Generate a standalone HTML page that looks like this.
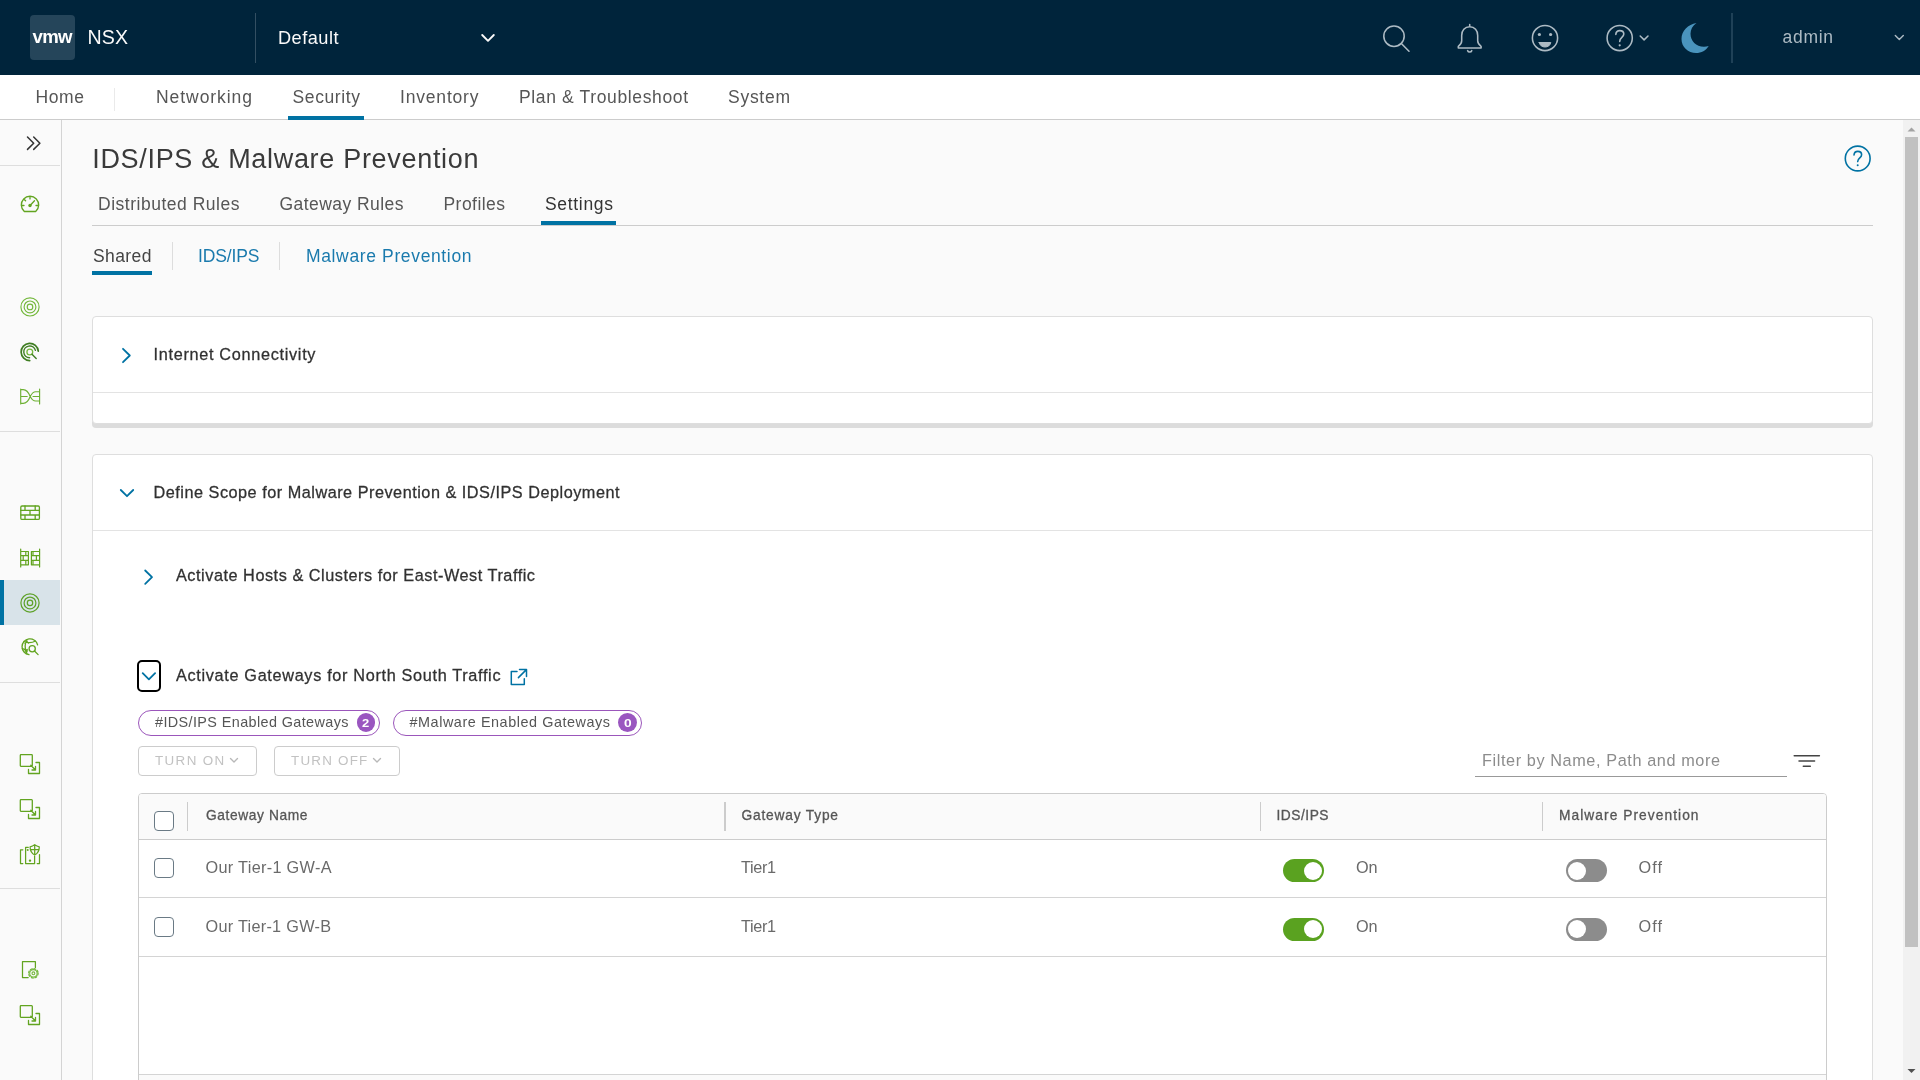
<!DOCTYPE html>
<html lang="en">
<head>
<meta charset="utf-8">
<title>NSX - IDS/IPS &amp; Malware Prevention</title>
<style>
*{box-sizing:border-box;margin:0;padding:0}
html,body{width:1920px;height:1080px;overflow:hidden;background:#fafafa;font-family:"Liberation Sans",Arial,sans-serif}
.a{position:absolute}
.t{position:absolute;white-space:pre;display:block}
svg{position:absolute;overflow:visible}
#hdr{left:0;top:0;width:1920px;height:75px;background:#00243b}
#nav{left:0;top:75px;width:1920px;height:45px;background:#fff;border-bottom:1px solid #ccc}
#side{left:0;top:120px;width:62px;height:960px;background:#fafafa;border-right:1px solid #d4d4d4}
.sep{left:0;width:60px;height:1px;background:#dedede}
.card{background:#fff;border:1px solid #dedede;border-radius:4px}
.cb{width:20px;height:20px;border:1px solid #6a7a85;border-radius:4px;background:#fff}
.g{fill:none;stroke:#62a420;stroke-width:1.5;stroke-linecap:round;stroke-linejoin:round}
.hi{fill:none;stroke:#adbbc4;stroke-width:1.55;stroke-linecap:round;stroke-linejoin:round}
.bl{fill:none;stroke:#0072a3;stroke-width:1.8;stroke-linecap:round;stroke-linejoin:round}
</style>
</head>
<body>
<!-- header -->
<div id="hdr" class="a"></div>
<div class="a" style="left:30px;top:15px;width:45px;height:45px;background:#25455a;border-radius:4px"></div>
<div class="a" style="left:255px;top:13px;width:1px;height:50px;background:#334f62"></div>
<div class="a" style="left:1731px;top:13px;width:2px;height:50px;background:#1f4157"></div>
<svg class="hi" style="left:0;top:0" width="1920" height="75">
 <path d="M482.200 35l5.800 5.800 5.800-5.800" stroke="#fafafa" stroke-width="1.900"/>
 <circle cx="1394" cy="36.200" r="10.200"/><path d="M1401.600 43.800l7.400 7.400"/>
 <path d="M1469.7 24.6v2.2M1469.7 26.8c-5 0-8 3.8-8 8.6v5.4c0 2.4-1.4 4.2-3.4 5.6v1.6h22.8v-1.6c-2-1.4-3.4-3.2-3.4-5.6v-5.4c0-4.8-3-8.6-8-8.6zM1467.6 50.6c.4 1 1.100 1.400 2.100 1.400s1.700-.4 2.100-1.400"/>
 <circle cx="1545" cy="38" r="12.6"/><circle cx="1539.400" cy="34.500" r="1.600" fill="#adbbc4" stroke="none"/><circle cx="1550.600" cy="34.500" r="1.600" fill="#adbbc4" stroke="none"/><path d="M1539.200 42.500h11.600c-.7 3-2.800 4.500-5.800 4.500s-5.100-1.500-5.800-4.500z" fill="#adbbc4" stroke-width="1"/>
 <circle cx="1619.700" cy="38" r="12.600"/><path d="M1615.800 34.400c.2-2.400 1.800-3.800 4-3.800 2.300 0 4 1.400 4 3.500 0 3.400-4.100 3.300-4.100 7.300" stroke-width="1.600"/><circle cx="1619.700" cy="45.300" r="1.100" fill="#adbbc4" stroke="none"/>
 <path d="M1640.200 36l3.900 3.900 3.900-3.900" stroke-width="1.500"/>
 <path d="M1895.300 35.500l4 4 4-4" stroke-width="1.400"/>
 <path d="M1696.500 23c-8.500 1.200-15 8-15 16 0 8.300 6.700 14 14.500 14 5.500 0 10-2.600 12.700-7-1.500.5-3 .7-4.700.7-8 0-13.500-5.700-13.500-13 0-4 2-8 6-10.700z" fill="#4a94bd" stroke="none"/>
</svg>
<!-- top nav -->
<div id="nav" class="a"></div>
<div class="a" style="left:114px;top:88px;width:1px;height:23px;background:#eaeaea"></div>
<div class="a" style="left:288px;top:116px;width:76px;height:4px;background:#0072a3"></div>
<!-- side nav -->
<div id="side" class="a"></div>
<div class="a sep" style="top:165px"></div>
<div class="a sep" style="top:431px"></div>
<div class="a sep" style="top:682px"></div>
<div class="a sep" style="top:888px"></div>
<div class="a" style="left:0;top:580px;width:60px;height:45px;background:#d8e3e9"></div>
<div class="a" style="left:0;top:580px;width:4px;height:45px;background:#0072a3"></div>
<svg class="g" style="left:0;top:0" width="62" height="1080">
 <path d="M27.500 137l6.200 6.200-6.200 6.200M33.700 137l6.200 6.200-6.200 6.200" stroke="#333" stroke-width="1.500"/>
 <!-- gauge -->
 <path d="M24.300 211.500a8.700 8.700 0 1 1 11.400 0z" stroke-width="1.350"/>
 <path d="M22 205.500h2M36 205.500h2M30 197.300v1.600M24.500 199.700l1.100 1.100M30.300 205.200l4.200-4.400" stroke-width="1.300"/>
 <circle cx="30" cy="205.500" r="1.700" fill="#62a420" stroke="none"/>
 <!-- rings 1 -->
 <g stroke="#74b83c" stroke-width="1.150"><circle cx="30" cy="306.900" r="9.100"/><circle cx="30" cy="306.900" r="5.900"/><circle cx="30" cy="306.900" r="2.800"/></g>
 <!-- radar -->
 <g stroke="#3f7d22" stroke-width="1.700"><path d="M38.300 351.200a8.600 8.600 0 1 0-8.600 9.400"/><path d="M35.400 350.400a5.900 5.900 0 1 0-5.800 7.400" stroke-width="1.400"/></g>
 <circle cx="29.800" cy="352" r="2.900" stroke="#74b83c" stroke-width="1.300"/><path d="M32 354.300l4.200 4.200" stroke="#3f7d22" stroke-width="1.400"/>
 <!-- lb -->
 <g stroke="#6db033" stroke-width="1.150"><path d="M20.700 389v15M39.600 389v15M20.700 396.500h6.500M33 396.500h6.600M20.700 389.600h2.500c4 0 5.500 3 7 6.900 1.500 3 3 4.500 5.500 4.500h3.900M20.700 403.400h2.500c4 0 5.500-3 7-6.900 1.500-3 3-4.800 5.500-4.800h3.900"/></g>
 <!-- firewall -->
 <g stroke-width="1.300"><rect x="20.800" y="506" width="18.600" height="13.400" rx="1.200"/><path d="M20.800 510.400h18.600M20.800 515h18.600M25 506v4.400M35.200 506v4.400M30 510.400v4.600M25 515v4.400M35.200 515v4.400"/></g>
 <!-- dual firewall -->
 <g stroke-width="1.200"><path d="M20.700 549v18M39.600 549v18M28.400 551.500v13.300M31.400 551.500v13.300M20.700 551.500h7.700M20.700 555.700h7.700M20.700 560.400h7.700M20.700 564.800h7.700M31.400 551.500h8.200M31.400 555.700h8.200M31.400 560.400h8.200M31.400 564.800h8.200M25.800 551.500v4.200M23.200 555.700v4.700M25.800 560.400v4.400M33 551.500v4.200M36.400 555.700v4.700M33 560.400v4.400"/></g>
 <!-- rings 2 -->
 <g stroke="#5fa22a" stroke-width="1.250"><circle cx="30" cy="602.900" r="9.100"/><circle cx="30" cy="602.900" r="5.900"/><circle cx="30" cy="602.900" r="2.700"/></g>
 <!-- globe search -->
 <g stroke-width="1.300"><path d="M29 654.600a7.900 7.900 0 1 1 8.600-9.800"/><path d="M24 641.500c3.500 1.500 8 1.500 11.500-.5M22.300 648.500c1.500.8 3 1.200 4.500 1.300M27 640c-2 3-2.500 8-.3 13.500M25 643.500l1.500-2.500 1.800 2.200M25 651l2 .8.200-2.400"/><circle cx="32.200" cy="648.700" r="3.100"/><path d="M34.500 651l3.600 3.600"/></g>
 <!-- copy arrows -->
 <g stroke-width="1.300">
  <path d="M21 754.700h10.600a.7.700 0 0 1 .7.700v10.200a.7.700 0 0 1-.7.700H21a.7.700 0 0 1-.7-.7v-10.200a.7.700 0 0 1 .7-.7zM36 762.500h3.500v11h-11v-4M30.800 765.300l4.700 4.700M35.500 766.500v3.500h-3.500"/>
  <path d="M21 799.700h10.600a.7.700 0 0 1 .7.700v10.200a.7.700 0 0 1-.7.700H21a.7.700 0 0 1-.7-.7v-10.200a.7.700 0 0 1 .7-.7zM36 807.500h3.500v11h-11v-4M30.800 810.300l4.700 4.700M35.500 811.500v3.500h-3.500"/>
  <path d="M21 1005.700h10.600a.7.700 0 0 1 .7.700v10.200a.7.700 0 0 1-.7.700H21a.7.700 0 0 1-.7-.7v-10.200a.7.700 0 0 1 .7-.7zM36 1013.500h3.500v11h-11v-4M30.800 1016.300l4.700 4.700M35.500 1017.500v3.500h-3.500"/>
 </g>
 <!-- hosts shield -->
 <g stroke-width="1.250"><path d="M22.800 849.800h-2.300v13.700h2.300M37.200 863.500h2.300v-9M28.300 847.300h-2.700v16.200h9v-7.500"/><path d="M30.100 846.800c1.800-.3 3.200-1 4.600-2.200 1.400 1.200 2.800 1.900 4.600 2.200 0 4-1.500 6.700-4.600 8.200-3.100-1.500-4.600-4.200-4.600-8.200zM34.700 844.800v10M30.300 849.600h8.800"/><circle cx="30" cy="860.600" r=".6" fill="#62a420"/><circle cx="27.700" cy="850" r=".4" fill="#62a420"/></g>
 <!-- file gear -->
 <g stroke-width="1.250"><path d="M28.200 977.600h-5.700v-16h12.900v5.800"/><g stroke="#74b83c" stroke-width="1.100"><circle cx="33.400" cy="973.300" r="3.700"/><circle cx="33.400" cy="973.300" r="1.400"/><circle cx="33.400" cy="973.300" r="4.700" stroke-width="1.300" stroke-dasharray="1.850 1.840"/></g></g>

 </svg>

<!-- content -->
<div class="a" style="left:92px;top:225px;width:1781px;height:1px;background:#ccc"></div>
<div class="a" style="left:541px;top:221px;width:75px;height:4px;background:#0072a3"></div>
<div class="a" style="left:92px;top:271px;width:60px;height:4px;background:#0072a3"></div>
<div class="a" style="left:172px;top:242px;width:1px;height:28px;background:#ddd"></div>
<div class="a" style="left:279px;top:242px;width:1px;height:28px;background:#ddd"></div>
<svg class="bl" style="left:0;top:0;stroke-width:1.600" width="1920" height="200"><circle cx="1857.700" cy="158.500" r="12.400"/><path d="M1854 155c.2-2.300 1.700-3.600 3.800-3.600 2.200 0 3.800 1.300 3.800 3.300 0 3.200-3.900 3.100-3.900 6.900"/><circle cx="1857.700" cy="165.300" r="1" fill="#0072a3" stroke="none"/></svg>
<!-- card 1 -->
<div class="a card" style="left:92px;top:316px;width:1781px;height:108px;box-shadow:0 4px 0 0 #dcdcdc"></div>
<div class="a" style="left:93px;top:392px;width:1779px;height:1px;background:#e3e3e3"></div>
<!-- card 2 -->
<div class="a card" style="left:92px;top:454px;width:1781px;height:640px"></div>
<div class="a" style="left:93px;top:530px;width:1779px;height:1px;background:#e3e3e3"></div>
<svg class="bl" style="left:0;top:0" width="700" height="800">
 <path d="M123 348.800l6.800 6.700-6.800 6.700"/>
 <path d="M120.800 490l6.200 6.200 6.200-6.200"/>
 <path d="M145.200 570.500l6.800 6.700-6.800 6.700"/>
 <path d="M142.700 673.200l6.200 6.200 6.200-6.200"/>
 <path d="M517 671.600h-5.700v13h13v-5.800M518.400 677.600l8-8M519.500 669.500h7v7" stroke-width="1.500"/>
</svg>
<div class="a" style="left:137px;top:660px;width:24px;height:32px;border:2px solid #000;border-radius:5px"></div>
<!-- chips -->
<div class="a" style="left:138px;top:710px;width:242px;height:26px;border:1px solid #9b56bb;border-radius:13px;background:#fff"></div>
<div class="a" style="left:393px;top:710px;width:249px;height:26px;border:1px solid #9b56bb;border-radius:13px;background:#fff"></div>
<div class="a" style="left:356.800px;top:713px;width:18.600px;height:18.600px;border-radius:10px;background:#9a56c0"></div>
<div class="a" style="left:618.200px;top:713px;width:18.600px;height:18.600px;border-radius:10px;background:#9a56c0"></div>
<!-- buttons -->
<div class="a" style="left:138px;top:746px;width:119px;height:30px;border:1px solid #ccc;border-radius:4px"></div>
<div class="a" style="left:274px;top:746px;width:126px;height:30px;border:1px solid #ccc;border-radius:4px"></div>
<svg style="left:0;top:0;fill:none;stroke:#b8b8b8;stroke-width:1.400;stroke-linecap:round;stroke-linejoin:round" width="500" height="800">
 <path d="M230.500 758.500l3.500 3.500 3.500-3.500"/><path d="M373.500 758.500l3.500 3.500 3.500-3.500"/>
</svg>
<!-- filter -->
<div class="a" style="left:1475px;top:776px;width:312px;height:1px;background:#999"></div>
<svg style="left:0;top:0;fill:none;stroke:#444;stroke-width:1.500;stroke-linecap:round" width="1920" height="800"><path d="M1794.200 755.700h25.200M1799 761h15.600M1803.300 766.300h7"/></svg>
<!-- table -->
<div class="a" style="left:138px;top:793px;width:1689px;height:300px;border:1px solid #ccc;border-radius:4px;background:#fff"></div>
<div class="a" style="left:139px;top:794px;width:1687px;height:46px;background:#fafafa;border-bottom:1px solid #ccc;border-radius:3px 3px 0 0"></div>
<div class="a" style="left:139px;top:897px;width:1687px;height:1px;background:#d4d4d4"></div>
<div class="a" style="left:139px;top:956px;width:1687px;height:1px;background:#d4d4d4"></div>
<div class="a" style="left:139px;top:1074px;width:1687px;height:1px;background:#d4d4d4"></div>
<div class="a" style="left:139px;top:1075px;width:1687px;height:10px;background:#fafafa"></div>
<div class="a" style="left:187px;top:802px;width:1px;height:29px;background:#ccc"></div>
<div class="a" style="left:724px;top:802px;width:2px;height:29px;background:#ccc"></div>
<div class="a" style="left:1260px;top:802px;width:1px;height:29px;background:#ccc"></div>
<div class="a" style="left:1542px;top:802px;width:1px;height:29px;background:#ccc"></div>
<div class="a cb" style="left:154px;top:811px"></div>
<div class="a cb" style="left:154px;top:858px"></div>
<div class="a cb" style="left:154px;top:917px"></div>
<!-- toggles -->
<div class="a" style="left:1282.700px;top:859.2px;width:41.400px;height:22.800px;border-radius:12px;background:#5aa220"></div>
<div class="a" style="left:1304px;top:861.6px;width:18px;height:18px;border-radius:9px;background:#fff"></div>
<div class="a" style="left:1565.700px;top:859.2px;width:41.400px;height:22.800px;border-radius:12px;background:#8c8c8c"></div>
<div class="a" style="left:1568px;top:861.6px;width:18px;height:18px;border-radius:9px;background:#fff"></div>
<div class="a" style="left:1282.700px;top:917.8px;width:41.400px;height:22.800px;border-radius:12px;background:#5aa220"></div>
<div class="a" style="left:1304px;top:920.2px;width:18px;height:18px;border-radius:9px;background:#fff"></div>
<div class="a" style="left:1565.700px;top:917.8px;width:41.400px;height:22.800px;border-radius:12px;background:#8c8c8c"></div>
<div class="a" style="left:1568px;top:920.2px;width:18px;height:18px;border-radius:9px;background:#fff"></div>
<!-- scrollbar -->
<div class="a" style="left:1903px;top:120px;width:17px;height:960px;background:#f1f1f1"></div>
<div class="a" style="left:1905px;top:137px;width:13px;height:809.500px;background:#c1c1c1"></div>
<svg style="left:0;top:0" width="1920" height="1080"><path d="M1907.500 131.500l4-4 4 4z" fill="#a3a3a3"/><path d="M1907.500 1069l4 4 4-4z" fill="#505050"/></svg>
<div class="a" style="left:0;top:0;width:1920px;height:1080px;will-change:transform">
<span class="t" style="left:32.5px;top:26.00px;font-size:18.6px;line-height:22px;color:#fff;letter-spacing:-0.672px;font-weight:700;">vmw</span>
<span class="t" style="left:87.5px;top:25.00px;font-size:19.6px;line-height:24px;color:#fafafa;letter-spacing:0.102px;">NSX</span>
<span class="t" style="left:278.0px;top:27.00px;font-size:18.2px;line-height:22px;color:#fafafa;letter-spacing:0.477px;">Default</span>
<span class="t" style="left:1782.5px;top:27.00px;font-size:17.5px;line-height:21px;color:#adbbc4;letter-spacing:0.707px;">admin</span>
<span class="t" style="left:35.5px;top:87.00px;font-size:17.5px;line-height:21px;color:#565656;letter-spacing:0.604px;">Home</span>
<span class="t" style="left:156.0px;top:87.00px;font-size:17.5px;line-height:21px;color:#565656;letter-spacing:0.939px;">Networking</span>
<span class="t" style="left:292.5px;top:87.00px;font-size:17.5px;line-height:21px;color:#565656;letter-spacing:0.612px;">Security</span>
<span class="t" style="left:400.0px;top:87.00px;font-size:17.5px;line-height:21px;color:#565656;letter-spacing:0.814px;">Inventory</span>
<span class="t" style="left:519.0px;top:87.00px;font-size:17.5px;line-height:21px;color:#565656;letter-spacing:0.633px;">Plan &amp; Troubleshoot</span>
<span class="t" style="left:728.0px;top:87.00px;font-size:17.5px;line-height:21px;color:#565656;letter-spacing:0.728px;">System</span>
<span class="t" style="left:92.2px;top:143.00px;font-size:27px;line-height:32px;color:#3a3a3a;letter-spacing:0.691px;">IDS/IPS &amp; Malware Prevention</span>
<span class="t" style="left:98.0px;top:194.00px;font-size:17.5px;line-height:21px;color:#565656;letter-spacing:0.516px;">Distributed Rules</span>
<span class="t" style="left:279.5px;top:194.00px;font-size:17.5px;line-height:21px;color:#565656;letter-spacing:0.444px;">Gateway Rules</span>
<span class="t" style="left:443.5px;top:194.00px;font-size:17.5px;line-height:21px;color:#565656;letter-spacing:0.449px;">Profiles</span>
<span class="t" style="left:545.0px;top:194.00px;font-size:17.5px;line-height:21px;color:#333;letter-spacing:0.681px;">Settings</span>
<span class="t" style="left:93.0px;top:246.00px;font-size:17.5px;line-height:21px;color:#444;letter-spacing:0.412px;">Shared</span>
<span class="t" style="left:198.0px;top:246.00px;font-size:17.5px;line-height:21px;color:#1a7aad;letter-spacing:-0.125px;">IDS/IPS</span>
<span class="t" style="left:306.0px;top:246.00px;font-size:17.5px;line-height:21px;color:#1a7aad;letter-spacing:0.638px;">Malware Prevention</span>
<span class="t" style="left:153.5px;top:344.00px;font-size:16.25px;line-height:20px;color:#313131;letter-spacing:0.693px;-webkit-text-stroke:0.28px currentColor;">Internet Connectivity</span>
<span class="t" style="left:153.5px;top:482.00px;font-size:16.25px;line-height:20px;color:#313131;letter-spacing:0.508px;-webkit-text-stroke:0.28px currentColor;">Define Scope for Malware Prevention &amp; IDS/IPS Deployment</span>
<span class="t" style="left:176.0px;top:565.00px;font-size:16.25px;line-height:20px;color:#313131;letter-spacing:0.534px;-webkit-text-stroke:0.28px currentColor;">Activate Hosts &amp; Clusters for East-West Traffic</span>
<span class="t" style="left:176.0px;top:665.00px;font-size:16.25px;line-height:20px;color:#313131;letter-spacing:0.669px;-webkit-text-stroke:0.28px currentColor;">Activate Gateways for North South Traffic</span>
<span class="t" style="left:155.0px;top:714.00px;font-size:14.4px;line-height:17px;color:#565656;letter-spacing:0.396px;">#IDS/IPS Enabled Gateways</span>
<span class="t" style="left:409.5px;top:714.00px;font-size:14.4px;line-height:17px;color:#565656;letter-spacing:0.555px;">#Malware Enabled Gateways</span>
<span class="t" style="left:362.4px;top:717.00px;font-size:11px;line-height:13px;color:#fff;letter-spacing:-0.027px;font-weight:700;transform:scaleX(1.18);transform-origin:0 0;">2</span>
<span class="t" style="left:623.5px;top:717.00px;font-size:11px;line-height:13px;color:#fff;letter-spacing:0.344px;font-weight:700;transform:scaleX(1.25);transform-origin:0 0;">0</span>
<span class="t" style="left:155.0px;top:753.00px;font-size:13.4px;line-height:16px;color:#c2c2c2;letter-spacing:1.383px;">TURN ON</span>
<span class="t" style="left:291.0px;top:753.00px;font-size:13.4px;line-height:16px;color:#c2c2c2;letter-spacing:1.230px;">TURN OFF</span>
<span class="t" style="left:1482.0px;top:750.00px;font-size:16.25px;line-height:20px;color:#8c8c8c;letter-spacing:0.597px;">Filter by Name, Path and more</span>
<span class="t" style="left:206.0px;top:808.00px;font-size:13.75px;line-height:16px;color:#565656;letter-spacing:0.612px;-webkit-text-stroke:0.3px currentColor;">Gateway Name</span>
<span class="t" style="left:741.5px;top:808.00px;font-size:13.75px;line-height:16px;color:#565656;letter-spacing:0.804px;-webkit-text-stroke:0.3px currentColor;">Gateway Type</span>
<span class="t" style="left:1276.5px;top:808.00px;font-size:13.75px;line-height:16px;color:#565656;letter-spacing:0.516px;-webkit-text-stroke:0.3px currentColor;">IDS/IPS</span>
<span class="t" style="left:1559.0px;top:808.00px;font-size:13.75px;line-height:16px;color:#565656;letter-spacing:1.058px;-webkit-text-stroke:0.3px currentColor;">Malware Prevention</span>
<span class="t" style="left:205.5px;top:857.00px;font-size:16.25px;line-height:20px;color:#6a6a6a;letter-spacing:0.315px;">Our Tier-1 GW-A</span>
<span class="t" style="left:741.0px;top:857.00px;font-size:16.25px;line-height:20px;color:#6a6a6a;letter-spacing:-0.355px;">Tier1</span>
<span class="t" style="left:1356.0px;top:857.00px;font-size:16.25px;line-height:20px;color:#6a6a6a;letter-spacing:-0.188px;">On</span>
<span class="t" style="left:1638.5px;top:857.00px;font-size:16.25px;line-height:20px;color:#6a6a6a;letter-spacing:1.055px;">Off</span>
<span class="t" style="left:205.5px;top:916.00px;font-size:16.25px;line-height:20px;color:#6a6a6a;letter-spacing:0.279px;">Our Tier-1 GW-B</span>
<span class="t" style="left:741.0px;top:916.00px;font-size:16.25px;line-height:20px;color:#6a6a6a;letter-spacing:-0.355px;">Tier1</span>
<span class="t" style="left:1356.0px;top:916.00px;font-size:16.25px;line-height:20px;color:#6a6a6a;letter-spacing:-0.188px;">On</span>
<span class="t" style="left:1638.5px;top:916.00px;font-size:16.25px;line-height:20px;color:#6a6a6a;letter-spacing:1.055px;">Off</span>
</div>
</body>
</html>
